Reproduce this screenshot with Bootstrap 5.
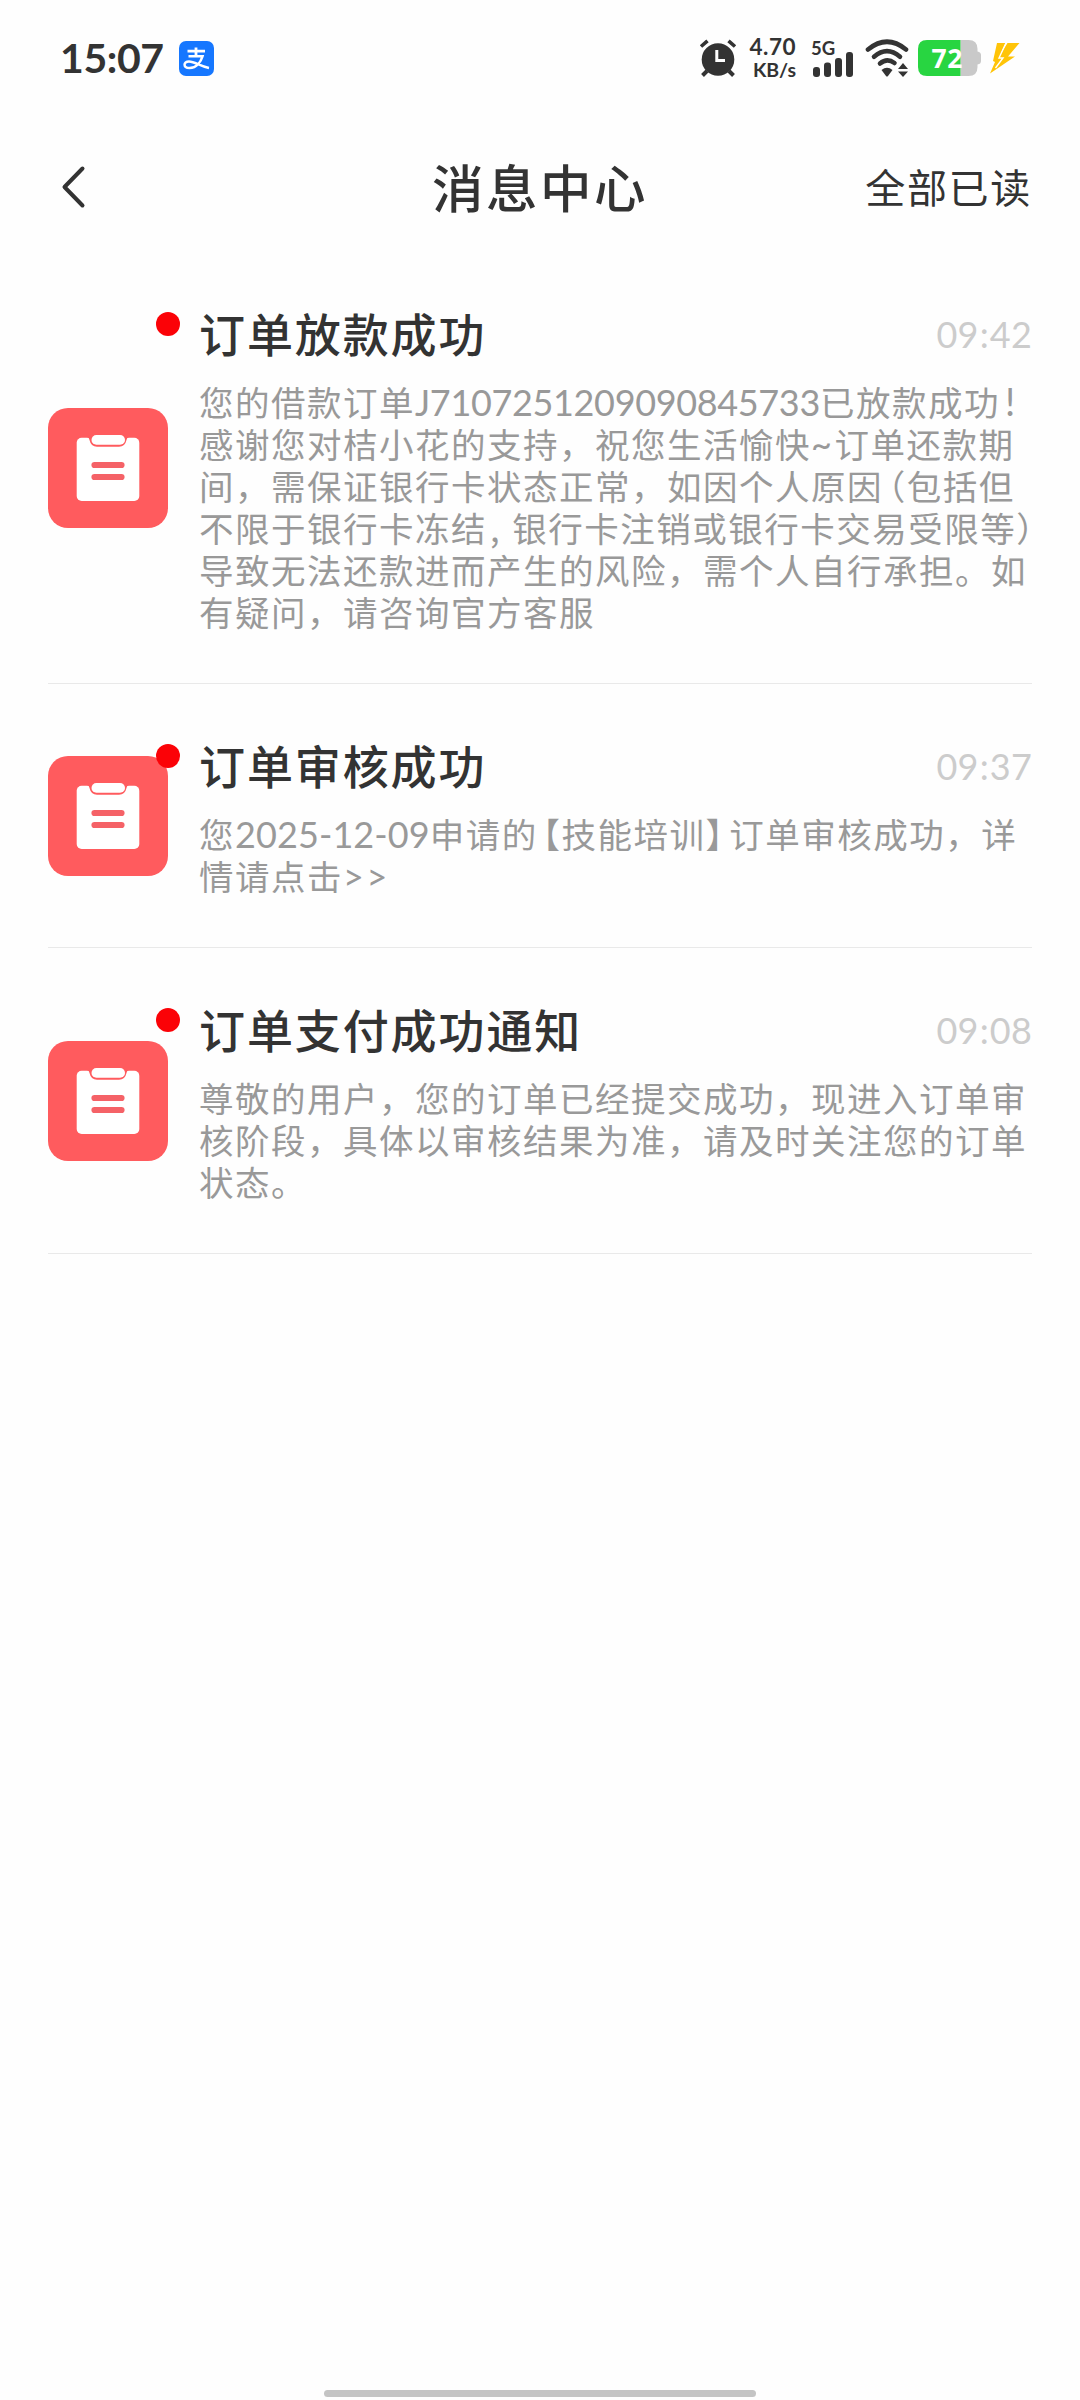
<!DOCTYPE html>
<html lang="zh-CN">
<head>
<meta charset="utf-8">
<meta name="viewport" content="width=device-width, initial-scale=1">
<title>消息中心</title>
<link href="https://cdn.jsdelivr.net/npm/bootstrap@5.3.0/dist/css/bootstrap.min.css" rel="stylesheet">
<style>
body{font-family:Lato,"Noto Sans CJK SC",sans-serif;color:#333;background:#fefefe;}
.screen{width:1080px;height:2400px;overflow:hidden;}
.status{height:116px;padding-left:60px;}
.status svg{flex:none;display:block;}
.clock{font-size:41px;font-weight:700;line-height:116px;width:119px;letter-spacing:-.4px;}
.speed{width:50px;margin-left:8px;text-align:right;font-weight:700;line-height:24px;}
.speed .val{font-size:22.5px;letter-spacing:.5px;}
.speed .unit{font-size:19.5px;line-height:22px;}
.signal{margin-left:15px;}
.wifi{margin-left:6px;}
.battery{margin-left:7px;}
.bolt{margin-left:8px;margin-right:60px;}
.topbar{height:136px;padding:7px 48px 0 48px;}
.topbar > *{flex:1 1 0;}
.back{height:128px;}
.back svg{margin-left:12px;}
.topbar .heading{font-size:51.5px;font-weight:500;letter-spacing:2.5px;line-height:80px;}
.topbar .action{font-size:40px;letter-spacing:1.7px;}
.msg{padding:49px 0 49px;margin:0 48px;border-bottom:1px solid #e9e9e9;position:relative;}
.msg-icon{width:120px;height:120px;margin-right:31px;}
.msg-body{min-width:0;}
.dot{position:absolute;left:108px;top:60px;width:24px;height:24px;background:#fb0207;}
.msg-title{font-size:46px;font-weight:500;letter-spacing:1.9px;line-height:67px;}
.time{font-size:36px;color:#ccc;line-height:67px;letter-spacing:.2px;}
.time .colon{padding:0 1px;}
.msg-text{font-size:34.5px;letter-spacing:1.5px;line-height:42px;color:#999;margin-top:14px;white-space:nowrap;}
.num{font-size:36px;letter-spacing:-.35px;line-height:1;}
.date{font-size:36px;letter-spacing:.1px;line-height:1;}
.gt{font-size:36px;letter-spacing:2.6px;line-height:1;}
.comma{font-family:"Noto Sans CJK SC",sans-serif;line-height:1;padding-left:3px;padding-right:2px;}
.bang{font-size:38px;line-height:1;padding-left:5px;}
.open,.close-p{font-feature-settings:"halt";}
.open{padding-left:5px;}
.close-p{padding-right:5px;}
.homebar{width:432px;height:7px;background:#c4c4c4;margin-bottom:3px;}
</style>
<script src="https://cdn.jsdelivr.net/npm/bootstrap@5.3.0/dist/js/bootstrap.bundle.min.js"></script>
</head>
<body>
<svg width="0" height="0" class="position-absolute">
  <symbol id="clipboard" viewBox="0 0 120 120">
    <rect width="120" height="120" rx="20" fill="#ff5b5e"/>
    <rect x="28.7" y="29.7" width="62.6" height="63.3" rx="5" fill="#fff"/>
    <path d="M39 29H81Q78.500 30 78.500 32Q77 38.800 71 38.800H49Q43 38.800 41.500 32Q41.500 30 39 29Z" fill="#ff5b5e"/>
    <rect x="43.500" y="27" width="33.500" height="9.800" rx="4.900" fill="#fff"/>
    <path d="M46.500 57H73.500M46.500 69H73.500" stroke="#f56267" stroke-width="6.200" stroke-linecap="round"/>
  </symbol>
</svg>
<div class="screen d-flex flex-column">
  <div class="status d-flex align-items-center">
    <div class="clock">15:07</div>
    <svg width="35" height="35" viewBox="0 0 35 35">
      <rect width="35" height="35" rx="7" fill="#1677ff"/>
      <g fill="none" stroke="#fff" stroke-linecap="butt">
        <path d="M8.500 10.200H26M17 6.500V15" stroke-width="2.800"/>
        <path d="M9.500 15.300H23.500C22 20 18 27 10.500 27C4 27 4 20.500 10 20.500C16 20.500 21 25.500 30 27" stroke-width="2.500"/>
      </g>
    </svg>
    <svg class="ms-auto" width="40" height="40" viewBox="0 0 40 40">
      <circle cx="20" cy="21.500" r="16.300" fill="#333"/>
      <path d="M3 8.500L9.500 2.800M37 8.500L30.500 2.800" stroke="#333" stroke-width="3.600"/>
      <path d="M9 33L4.500 37.500M31 33L35.500 37.500" stroke="#333" stroke-width="4"/>
      <path d="M18.800 12V22.500H27" fill="none" stroke="#fff" stroke-width="3"/>
    </svg>
    <div class="speed"><div class="val">4.70</div><div class="unit">KB/s</div></div>
    <svg class="signal" width="48" height="40" viewBox="0 0 48 40">
      <text x="0" y="17" font-family="Lato" font-weight="700" font-size="18.500" fill="#333">5G</text>
      <g fill="#333"><rect x="2" y="29" width="7" height="10" rx="3"/><rect x="13" y="24.500" width="7" height="14.500" rx="3"/><rect x="24" y="20" width="7" height="19" rx="3"/><rect x="35" y="14" width="7" height="25" rx="3"/></g>
    </svg>
    <svg class="wifi" width="46" height="40" viewBox="0 0 46 40">
      <g fill="none" stroke="#333" stroke-width="4.600" stroke-linecap="round">
        <path d="M3 11.500Q22 -4 41 11.500"/><path d="M9 18.800Q22 7.500 35 18.800"/><path d="M15 25.500Q22 19.500 29.500 25"/>
      </g>
      <path d="M16.500 32Q22 27.500 27.500 32L23 38Q22 39 21 38Z" fill="#333"/>
      <path d="M33 31L38 25L43 31ZM33 33.500H43L38 39Z" fill="#333"/>
    </svg>
    <svg class="battery" width="64" height="36" viewBox="0 0 64 36">
      <path d="M42.500 0H50.500Q59.500 0 59.500 9V11.500Q63 12 63 15V21Q63 24 59.500 24.500V27Q59.500 36 50.500 36H42.500Z" fill="#c9c9c9"/>
      <path d="M42.500 0H9Q0 0 0 9V27Q0 36 9 36H42.500Z" fill="#28d541"/>
      <text x="13.500" y="27.500" font-family="Noto Sans" font-weight="700" font-size="26.500" fill="#fff" textLength="31">72</text>
    </svg>
    <svg class="bolt" width="30" height="34" viewBox="0 0 30 34">
      <path d="M7 2H15.500L10.500 13L17.500 2H29.500L18 15.500H25L0 32.500L5 21L3 20Z" fill="#ffc408"/>
      <path d="M16.500 1L9 17H13L5.500 27" fill="none" stroke="#fff" stroke-width="1.400"/>
    </svg>
  </div>
  <div class="topbar d-flex align-items-start">
    <div class="back d-flex align-items-center">
      <svg width="28" height="44" viewBox="0 0 28 44"><path d="M22.500 3.500L4.500 22L22.500 40.500" fill="none" stroke="#333" stroke-width="4" stroke-linecap="round" stroke-linejoin="round"/></svg>
    </div>
    <div class="heading text-center text-nowrap align-self-center">消息中心</div>
    <div class="action text-end align-self-center">全部已读</div>
  </div>
  <div>
    <div class="msg d-flex align-items-center">
      <svg class="msg-icon flex-shrink-0"><use href="#clipboard"/></svg><span class="dot rounded-circle"></span>
      <div class="msg-body flex-grow-1">
        <div class="d-flex justify-content-between"><div class="msg-title">订单放款成功</div><div class="time">09<span class="colon">:</span>42</div></div>
        <div class="msg-text">您的借款订单<span class="num">J7107251209090845733</span>已放款成功<span class="bang">!</span><br>感谢您对桔小花的支持，祝您生活愉快<span class="gt">~</span>订单还款期<br>间，需保证银行卡状态正常，如因个人原因<span class="open">（</span>包括但<br>不限于银行卡冻结<span class="comma">,&nbsp;</span>银行卡注销或银行卡交易受限等<span class="close-p">）</span><br>导致无法还款进而产生的风险，需个人自行承担。如<br>有疑问，请咨询官方客服</div>
      </div>
    </div>
    <div class="msg d-flex align-items-center">
      <svg class="msg-icon flex-shrink-0"><use href="#clipboard"/></svg><span class="dot rounded-circle"></span>
      <div class="msg-body flex-grow-1">
        <div class="d-flex justify-content-between"><div class="msg-title">订单审核成功</div><div class="time">09<span class="colon">:</span>37</div></div>
        <div class="msg-text">您<span class="date">2025-12-09</span>申请的<span class="open">【</span>技能培训<span class="close-p">】</span>订单审核成功，详<br>情请点击<span class="gt">&gt;&gt;</span></div>
      </div>
    </div>
    <div class="msg d-flex align-items-center">
      <svg class="msg-icon flex-shrink-0"><use href="#clipboard"/></svg><span class="dot rounded-circle"></span>
      <div class="msg-body flex-grow-1">
        <div class="d-flex justify-content-between"><div class="msg-title">订单支付成功通知</div><div class="time">09<span class="colon">:</span>08</div></div>
        <div class="msg-text">尊敬的用户，您的订单已经提交成功，现进入订单审<br>核阶段，具体以审核结果为准，请及时关注您的订单<br>状态。</div>
      </div>
    </div>
  </div>
  <div class="homebar rounded-pill mt-auto mx-auto"></div>
</div>
</body>
</html>
